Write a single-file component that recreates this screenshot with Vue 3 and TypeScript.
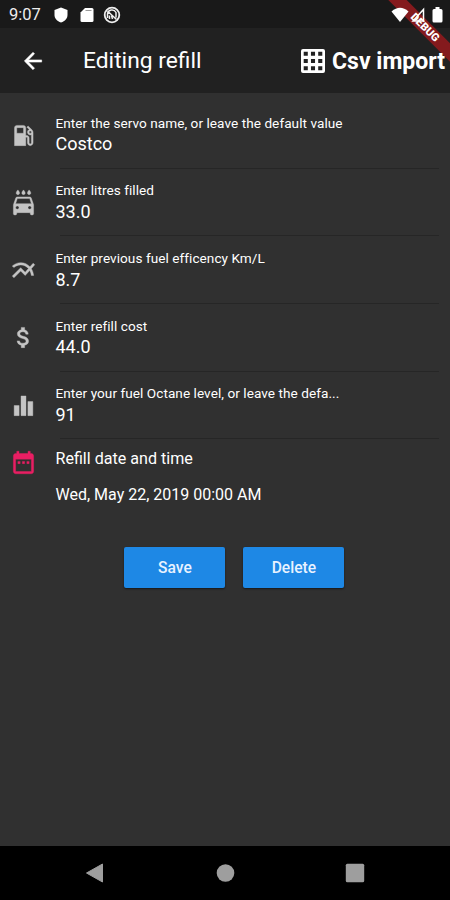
<script setup lang="ts">
interface Field {
  label: string
  value: string
  icon: string
}

const fields: Field[] = [
  {
    label: 'Enter the servo name, or leave the default value',
    value: 'Costco',
    icon: 'M19.77 7.23l.01-.01-3.72-3.72L15 4.56l2.11 2.11c-.94.36-1.61 1.26-1.61 2.33 0 1.38 1.12 2.5 2.5 2.5.36 0 .69-.08 1-.21v7.21c0 .55-.45 1-1 1s-1-.45-1-1V14c0-1.1-.9-2-2-2h-1V5c0-1.1-.9-2-2-2H6c-1.1 0-2 .9-2 2v16h10v-7.5h1.5v5c0 1.38 1.12 2.5 2.5 2.5s2.5-1.12 2.5-2.5V9c0-.69-.28-1.32-.73-1.77zM12 10H6V5h6v5zm6 0c-.55 0-1-.45-1-1s.45-1 1-1 1 .45 1 1-.45 1-1 1z',
  },
  {
    label: 'Enter litres filled',
    value: '33.0',
    icon: 'M17 5c.83 0 1.5-.67 1.5-1.5 0-1-1.5-2.7-1.5-2.7s-1.5 1.7-1.5 2.7c0 .83.67 1.5 1.5 1.5zm-5 0c.83 0 1.5-.67 1.5-1.5 0-1-1.5-2.7-1.5-2.7s-1.5 1.7-1.5 2.7c0 .83.67 1.5 1.5 1.5zM7 5c.83 0 1.5-.67 1.5-1.5C8.5 2.5 7 .8 7 .8S5.5 2.5 5.5 3.5C5.5 4.33 6.17 5 7 5zm11.92 3.01C18.72 7.42 18.16 7 17.5 7h-11c-.66 0-1.21.42-1.42 1.01L3 14v8c0 .55.45 1 1 1h1c.55 0 1-.45 1-1v-1h12v1c0 .55.45 1 1 1h1c.55 0 1-.45 1-1v-8l-2.08-5.99zM6.5 18c-.83 0-1.5-.67-1.5-1.5S5.67 15 6.5 15s1.5.67 1.5 1.5S7.33 18 6.5 18zm11 0c-.83 0-1.5-.67-1.5-1.5s.67-1.5 1.5-1.5 1.5.67 1.5 1.5-.67 1.5-1.5 1.5zM5 13l1.5-4.5h11L19 13H5z',
  },
  {
    label: 'Enter previous fuel efficency Km/L',
    value: '8.7',
    icon: 'M22 6.92l-1.41-1.41-2.85 3.21C15.68 6.4 12.83 5 9.61 5 6.72 5 4.07 6.16 2 8l1.42 1.42C5.12 7.93 7.27 7 9.61 7c2.74 0 5.09 1.26 6.77 3.24l-2.88 3.24-4-4L2 16.99l1.5 1.5 6-6.01 4 4 4.05-4.55c.75 1.35 1.25 2.9 1.44 4.55H21c-.22-2.3-.95-4.39-2.04-6.14L22 6.92z',
  },
  {
    label: 'Enter refill cost',
    value: '44.0',
    icon: 'M11.8 10.9c-2.27-.59-3-1.2-3-2.15 0-1.09 1.01-1.85 2.7-1.85 1.78 0 2.44.85 2.5 2.1h2.21c-.07-1.72-1.12-3.3-3.21-3.81V3h-3v2.16c-1.94.42-3.5 1.68-3.5 3.61 0 2.31 1.91 3.46 4.7 4.13 2.5.6 3 1.48 3 2.41 0 .69-.49 1.79-2.7 1.79-2.06 0-2.87-.92-2.98-2.1h-2.2c.12 2.19 1.76 3.42 3.68 3.83V21h3v-2.15c1.95-.37 3.5-1.5 3.5-3.55 0-2.84-2.43-3.81-4.7-4.4z',
  },
  {
    label: 'Enter your fuel Octane level, or leave the defa...',
    value: '91',
    icon: 'M3.7 12h4.4v9H3.7zM9.8 3.5h4.4V21H9.8zM15.9 8.5h4.4V21h-4.4z',
  },
]
</script>

<template>
  <div class="screen">
    <header class="status">
      <span class="clock">9:07</span>
      <svg class="shield" viewBox="0 0 14 16"><path d="M7 .5 13.5 3v5c0 3.500-2.500 6-6.500 7.500C3 14 .5 11.500.5 8V3z" /></svg>
      <svg class="card" viewBox="0 0 14 16"><path d="M5 1h7a1.500 1.500 0 0 1 1.500 1.500v11A1.500 1.500 0 0 1 12 15H2a1.500 1.500 0 0 1-1.500-1.500V5.500z" /><path d="M5.500 3.500h6" stroke="#999" /></svg>
      <svg class="sync" viewBox="0 0 18 18"><g fill="none" stroke="#eee"><circle cx="9" cy="9" r="7.300" stroke-width="1.800" /><path d="M4.500 12V8a4.500 4.500 0 0 1 8.500-1.500v5M4.500 5l9 8.500M6.500 13V9.500M9.500 13l-1-3.500" stroke-width="1.500" /></g></svg>
      <div class="signals">
        <svg class="wifi" viewBox="0 0 18 16"><path d="M.5 4.500Q9-3 17.500 4.500L9 15z" /></svg>
        <svg class="cell" viewBox="0 0 14 16"><path d="M12.500 2.500v11.500H2z" fill="none" stroke="#fff" stroke-width="1.500" /></svg>
        <svg class="battery" viewBox="0 0 11 16"><path d="M3.500 0h4v2H9a1.500 1.500 0 0 1 1.500 1.500V14A1.500 1.500 0 0 1 9 15.500H2A1.500 1.500 0 0 1 .5 14V3.500A1.500 1.500 0 0 1 2 2h1.500z" /></svg>
      </div>
    </header>

    <nav class="appbar">
      <svg class="back" viewBox="0 0 24 24"><path d="M20 11H7.830l5.590-5.590L12 4l-8 8 8 8 1.410-1.410L7.830 13H20z" stroke="#fff" stroke-width=".5" /></svg>
      <h1>Editing refill</h1>
      <div class="import">
        <svg viewBox="0 0 24 24"><path fill-rule="evenodd" d="M2 0h20a2 2 0 0 1 2 2v20a2 2 0 0 1-2 2H2a2 2 0 0 1-2-2V2a2 2 0 0 1 2-2zM2.700 2.700v4.100h4.100V2.700zm7.250 0v4.100h4.100V2.700zm7.250 0v4.100h4.100V2.700zM2.700 9.950v4.100h4.100v-4.100zm7.250 0v4.100h4.100v-4.100zm7.250 0v4.100h4.100v-4.100zM2.700 17.200v4.100h4.100v-4.100zm7.250 0v4.100h4.100v-4.100zm7.250 0v4.100h4.100v-4.100z" /></svg>
        <span>Csv import</span>
      </div>
    </nav>
    <div class="ribbon">DEBUG</div>

    <main>
      <div v-for="field in fields" :key="field.label" class="row">
        <svg class="icon" viewBox="0 0 24 24"><path :d="field.icon" /></svg>
        <div class="field">
          <span class="label">{{ field.label }}</span>
          <span class="value">{{ field.value }}</span>
        </div>
      </div>

      <div class="date">
        <svg class="icon" viewBox="0 0 24 24"><path d="M9 11H7v2h2v-2zm4 0h-2v2h2v-2zm4 0h-2v2h2v-2zm2-7h-1V2h-2v2H8V2H6v2H5c-1.110 0-1.990.9-1.990 2L3 20c0 1.100.89 2 2 2h14c1.100 0 2-.9 2-2V6c0-1.100-.9-2-2-2zm0 16H5V9h14v11z" /></svg>
        <div class="date-text">
          <span class="date-title">Refill date and time</span>
          <span class="date-value">Wed, May 22, 2019 00:00 AM</span>
        </div>
      </div>

      <div class="actions">
        <button type="button">Save</button>
        <button type="button">Delete</button>
      </div>
    </main>

    <footer>
      <svg viewBox="0 0 20 20"><path d="M17.500 1v18L1.500 10z" stroke="#9e9e9e" stroke-linejoin="round" /></svg>
      <svg viewBox="0 0 20 20"><circle cx="10.500" cy="10" r="8.800" /></svg>
      <svg viewBox="0 0 20 20"><rect x=".8" y=".8" width="18.400" height="18.400" rx="1.500" /></svg>
    </footer>
  </div>
</template>

<style>
body {
  margin: 0;
  background: #303030;
}
</style>

<style scoped>
.screen {
  position: relative;
  display: flex;
  flex-direction: column;
  width: 450px;
  height: 900px;
  overflow: hidden;
  background: #303030;
  color: #fff;
  font-family: Roboto, "Liberation Sans", sans-serif;
}
svg {
  display: block;
  flex: none;
  fill: #fff;
}
.status {
  display: flex;
  align-items: center;
  height: 28px;
  padding: 1px 7px 0 9px;
  box-sizing: border-box;
  background: #191919;
}
.clock {
  width: 45px;
  font-size: 16.5px;
  line-height: 28px;
  color: #eee;
}
.shield { width: 14px; height: 16px; }
.card { width: 14px; height: 16px; margin-left: 12px; }
.sync { width: 18px; height: 18px; margin-left: 9px; }
.signals {
  position: relative;
  z-index: 2;
  display: flex;
  align-items: center;
  margin-left: auto;
}
.wifi { width: 18px; height: 16px; }
.cell { width: 14px; height: 16px; margin-left: 2px; }
.battery { width: 11px; height: 16px; margin-left: 7px; }
.appbar {
  display: flex;
  align-items: center;
  height: 65px;
  padding: 0 5px 0 19.500px;
  box-sizing: border-box;
  background: #212121;
}
.back { width: 26px; height: 26px; }
h1 {
  margin: 0 0 0 37.500px;
  padding-top: 1px;
  font-size: 22.800px;
  font-weight: 400;
  line-height: 30px;
  white-space: nowrap;
}
.import {
  position: relative;
  z-index: 2;
  display: flex;
  align-items: center;
  gap: 7px;
  margin-left: auto;
  font-size: 23px;
  font-weight: 700;
  white-space: nowrap;
}
.import svg { width: 24px; height: 24px; }
.import span { padding-top: 2px; }
.ribbon {
  position: absolute;
  z-index: 1;
  top: 21px;
  left: 370px;
  width: 110px;
  height: 13px;
  transform: rotate(45deg);
  background: #841a1d;
  font-size: 11px;
  font-weight: 900;
  line-height: 13px;
  text-align: center;
}
main {
  flex: 1;
  padding: 8px 11px 0 10px;
}
.row {
  display: flex;
  height: 67.650px;
}
.icon {
  width: 27px;
  height: 27px;
  fill: #c4c4c4;
  stroke: #c4c4c4;
  stroke-width: .35px;
}
.row .icon { margin-top: 20.500px; }
.field {
  display: flex;
  flex: 1;
  flex-direction: column;
  box-sizing: border-box;
  margin-left: 18.500px;
  padding-top: 12.800px;
  background: linear-gradient(#262626, #262626) right bottom / calc(100% - 4px) 1px no-repeat;
}
.label {
  font-size: 13.600px;
  letter-spacing: .05px;
  line-height: 18px;
  white-space: nowrap;
}
.value {
  padding-top: .7px;
  font-size: 18px;
  line-height: 24px;
}
.date {
  display: flex;
  padding-top: 9.500px;
}
.date .icon { fill: #e91e63; stroke: #e91e63; }
.date-text {
  display: flex;
  flex-direction: column;
  gap: 16px;
  margin-left: 18.500px;
  line-height: 20px;
}
.date-title { font-size: 16.100px; }
.date-value { font-size: 16px; }
.actions {
  display: flex;
  gap: 18px;
  padding: 42px 0 0 114.400px;
}
button {
  width: 101px;
  height: 41px;
  padding: 2px 0 0;
  border: 0;
  border-radius: 2px;
  background: #1e88e5;
  box-shadow: 0 1px 2px #0008;
  color: #e8f2ff;
  font: 500 15.600px Roboto, "Liberation Sans", sans-serif;
}
footer {
  display: flex;
  align-items: center;
  gap: 110px;
  height: 54px;
  padding-left: 85px;
  background: #000;
}
footer svg {
  width: 20px;
  height: 20px;
  fill: #9e9e9e;
}
</style>
